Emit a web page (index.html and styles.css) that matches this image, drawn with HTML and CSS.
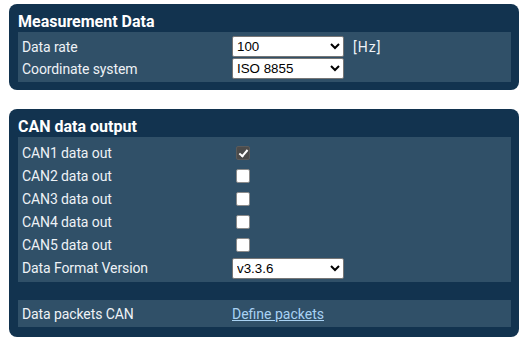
FILE: index.html
```html
<!DOCTYPE html>
<html>
<head>
<meta charset="utf-8">
<link rel="stylesheet" href="styles.css">
</head>
<body>
<section class="panel panel-first">
  <h2 class="panel-title">Measurement Data</h2>
  <div class="panel-body body-compact">
    <div class="row row-21">
      <span class="label">Data rate</span>
      <span class="value">
        <select class="sel"><option>100</option></select>
        <span class="unit">[Hz]</span>
      </span>
    </div>
    <div class="row row-21">
      <span class="label">Coordinate system</span>
      <span class="value"><select class="sel"><option>ISO 8855</option></select></span>
    </div>
  </div>
</section>

<section class="panel panel-second">
  <h2 class="panel-title">CAN data output</h2>
  <div class="panel-body body-can">
    <div class="row row-23"><span class="label">CAN1 data out</span><span class="value"><input type="checkbox" class="chk" checked></span></div>
    <div class="row row-23"><span class="label">CAN2 data out</span><span class="value"><input type="checkbox" class="chk"></span></div>
    <div class="row row-23"><span class="label">CAN3 data out</span><span class="value"><input type="checkbox" class="chk"></span></div>
    <div class="row row-23"><span class="label">CAN4 data out</span><span class="value"><input type="checkbox" class="chk"></span></div>
    <div class="row row-23"><span class="label">CAN5 data out</span><span class="value"><input type="checkbox" class="chk"></span></div>
    <div class="row row-24"><span class="label">Data Format Version</span><span class="value"><select class="sel"><option>v3.3.6</option></select></span></div>
  </div>
  <div class="panel-body body-link">
    <div class="row row-27"><span class="label">Data packets CAN</span><span class="value"><a href="#" class="link">Define packets</a></span></div>
  </div>
</section>
</body>
</html>
```

FILE: styles.css
```css
html, body {
  margin: 0;
  padding: 0;
  background: #ffffff;
}
body {
  padding: 4px 11px 0 9px;
  font-family: Roboto, "Liberation Sans", sans-serif;
}
.panel {
  background: #12334f;
  border-radius: 8px;
  padding: 0 8px 8px 9px;
}
.panel-second {
  margin-top: 19px;
  padding-bottom: 10px;
}
.panel-title {
  margin: 0;
  height: 28px;
  box-sizing: border-box;
  padding: 9px 0 1px 0;
  font-size: 16px;
  line-height: 18px;
  font-weight: 700;
  color: #ffffff;
  letter-spacing: 0;
}
.panel-body {
  background: #305068;
  padding: 0 4px;
}
.body-compact {
  padding-top: 4px;
  padding-bottom: 3px;
  display: flex;
  flex-direction: column;
  gap: 1px;
}
.body-can {
  padding-top: 4px;
  padding-bottom: 2px;
}
.body-link {
  margin-top: 18px;
}
.row {
  display: grid;
  grid-template-columns: 210px 1fr;
  align-items: center;
}
.row-21 { height: 21px; }
.row-23 { height: 23px; }
.row-24 { height: 24px; }
.row-27 { height: 27px; }
.label {
  font-size: 14px;
  color: #eef2f6;
  letter-spacing: -0.1px;
}
.value {
  display: flex;
  align-items: center;
}
.sel {
  width: 112px;
  height: 21px;
  margin: 0;
  font-family: "Liberation Sans", Arial, sans-serif;
  font-size: 13.33px;
  background: #ffffff;
  color: #000000;
  border: 1px solid #767676;
  border-radius: 2px;
}
.unit {
  margin-left: 9px;
  font-size: 14px;
  letter-spacing: 1px;
  color: #eef2f6;
}
.chk {
  -webkit-appearance: none;
  appearance: none;
  position: relative;
  box-sizing: border-box;
  width: 14px;
  height: 14px;
  margin: 0 0 0 4px;
  background: #ffffff;
  border: 1px solid #8a8a8a;
  border-radius: 2px;
}
.chk:checked {
  background: #4b4b4b;
  border-color: #5a5a5a;
}
.chk:checked::after {
  content: "";
  position: absolute;
  left: 4px;
  top: 1px;
  width: 3px;
  height: 7px;
  border-right: 2px solid #ffffff;
  border-bottom: 2px solid #ffffff;
  transform: rotate(40deg);
}
.link {
  font-size: 14px;
  color: #a9d2f3;
  text-decoration: underline;
}
```
